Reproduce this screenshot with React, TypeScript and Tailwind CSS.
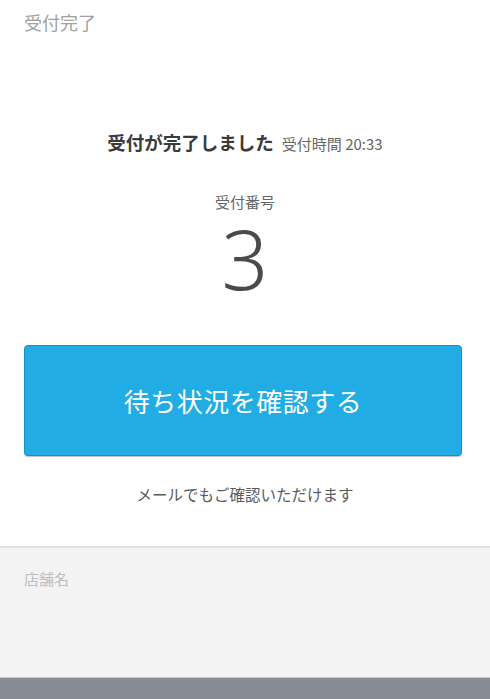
export default function App() {
  return (
    <div
      className="w-[490px] h-[699px] flex flex-col bg-white overflow-hidden"
      style={{ fontFamily: '"Noto Sans CJK JP", "Noto Sans", sans-serif' }}
    >
      {/* Header */}
      <div className="h-[44px] px-[24px] pt-[9px] text-[18px] leading-[26px] text-[#a0a0a0]">受付完了</div>

      {/* Main */}
      <div className="flex flex-col items-center">
        <div className="mt-[85px] flex items-baseline gap-[8px] leading-[26px]">
          <span className="text-[18.5px] font-bold text-[#3a3a3a]">受付が完了しました</span>
          <span className="text-[15px] text-[#666]">受付時間 20:33</span>
        </div>
        <div className="mt-[34px] text-[15px] leading-[22px] text-[#666]">受付番号</div>
        <div
          className="h-[90px] text-[82px] leading-[90px] font-light text-[#4a4a4a]"
          style={{ fontFamily: '"Noto Sans", sans-serif' }}
        >
          3
        </div>
      </div>

      <button className="mt-[42px] ml-[24px] w-[438px] h-[111px] shrink-0 rounded-[4px] bg-[#21ace3] border border-[#1b8ec0] shadow-[0_1px_1px_rgba(0,0,0,0.25)] text-white text-[26px] tracking-[0.5px]">
        待ち状況を確認する
      </button>

      <div className="mt-[27px] text-center text-[15.5px] leading-[22px] text-[#5a5a5a]">メールでもご確認いただけます</div>

      {/* Footer */}
      <div className="mt-[41px] flex-1 flex flex-col bg-[#f3f3f3] border-t-2 border-[#e2e2e2]">
        <div className="px-[24px] pt-[20px] text-[15px] leading-[22px] text-[#bdbdbd]">店舗名</div>
        <div className="flex-1" />
        <div className="h-[22px] shrink-0 bg-[#878d94] border-t border-[#c8c8c8]" />
      </div>
    </div>
  );
}
